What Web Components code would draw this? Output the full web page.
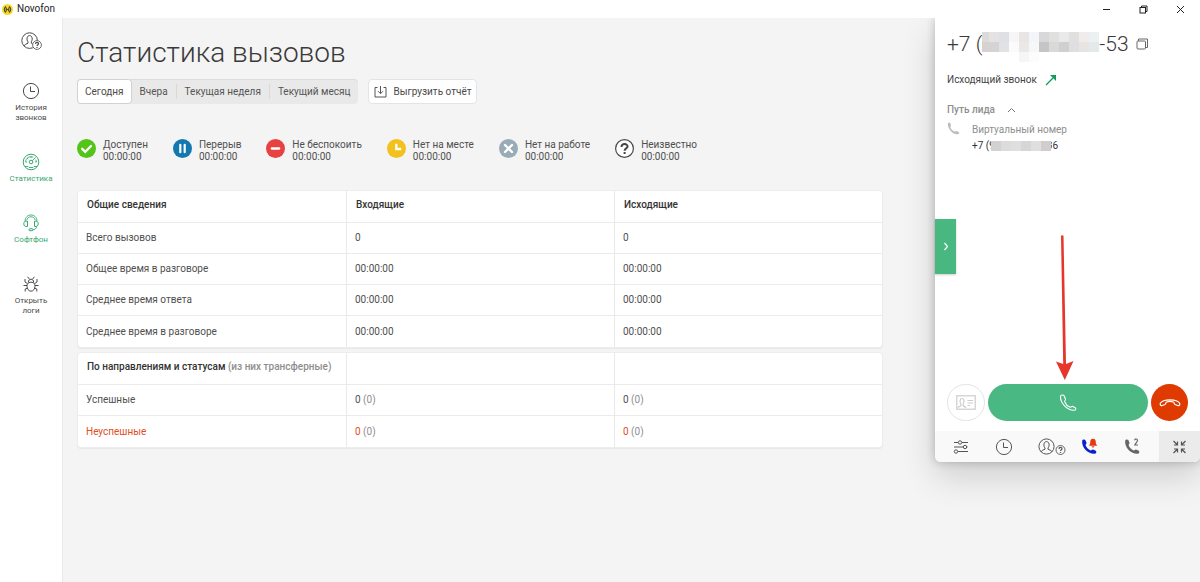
<!DOCTYPE html>
<html lang="ru">
<head>
<meta charset="utf-8">
<meta name="viewport" content="width=device-width, initial-scale=1">
<title>Novofon</title>
<style>
  body { margin: 0; background: #f4f4f4; color: #4f4f4f; font-family: Roboto, "Liberation Sans", sans-serif; font-size: 10px; line-height: 12px; }
</style>
</head>
<body>
<novofon-app></novofon-app>

<script>
const ICONS = {
  logo: [11, 11, `<circle cx="5.5" cy="5.5" r="5.5" fill="#f7d92c"/><g fill="none" stroke="#4d4720" stroke-width="1.1"><path d="M4 2.6A3.3 3.3 0 0 0 4 8.4M7 2.6A3.3 3.3 0 0 1 7 8.4M4.2 3.4V7.6M6.8 3.4V7.6M4.2 4.6L6.8 6.4"/></g>`],
  minimize: [9, 9, `<path d="M1 4.5H8" stroke="#222" fill="none"/>`],
  restore: [9, 9, `<g fill="none" stroke="#222"><rect x="1" y="2.5" width="5.5" height="5.5"/><path d="M2.5 2.5V1H8V6.5H6.5"/></g>`],
  close: [9, 9, `<path d="M1 1L8 8M8 1L1 8" stroke="#222" fill="none"/>`],
  user: [21, 20, `<g fill="none" stroke="currentColor"><circle cx="8.6" cy="8.6" r="7.8"/><path d="M3 14C3.4 12.4 6 11.8 7 11.2V9.8C5.4 8 5.6 3.6 8.6 3.6S11.8 8 10.3 9.8V11.2L11.6 12"/><circle cx="16" cy="13" r="4.4" fill="#fff" stroke-width=".8"/><path d="M14.6 12C14.6 10 17.5 10 17.5 11.7C17.5 12.6 16 12.8 16 14M16 15V16" stroke-width="1.2"/></g>`],
  contact: [28, 18, `<g fill="none" stroke="currentColor"><circle cx="8.5" cy="8.5" r="7.6"/><path d="M3 13.800C3.400 12.400 6 11.800 7 11.200V10C5.200 8 5.500 3.600 8.500 3.600S11.800 8 10 10V11.200C11 11.800 13.600 12.400 14 13.800"/><circle cx="22.500" cy="12" r="4.500" stroke-width=".9"/><path d="M21 11C21 9 24 9 24 10.700C24 11.600 22.500 11.800 22.500 13M22.500 14V15" stroke-width="1.200"/></g>`],
  clock: [18, 18, `<g fill="none" stroke="currentColor"><circle cx="9" cy="9" r="7.600"/><path d="M8.500 4.500V9.500H13"/></g>`],
  gauge: [18, 18, `<g fill="none" stroke="currentColor"><circle cx="9" cy="9" r="7.800"/><circle cx="9" cy="9" r="1.800"/><path d="M10.300 7.700L13.600 4.400M3.600 9A5.400 5.400 0 0 1 11.300 4.200M14.400 9A5.400 5.400 0 0 0 13.800 6.600M3 13.500H6L7 14.500H11L12 13.500H15M3.600 9H5M9 3.600V5M13 9H14.400M5.200 5.200L6.100 6.100" stroke-width=".9"/></g>`],
  headset: [18, 18, `<g fill="none" stroke="currentColor"><path d="M3 7.500C3 -1.200 15 -1.200 15 7.500M4.800 6.200C5.400 1.600 12.600 1.600 13.200 6.200" stroke-width=".9"/><path d="M5.500 7.200C3 6.600 1.800 8 1.800 9.800S3 13 5.500 12.400ZM12.500 7.200C15 6.600 16.200 8 16.200 9.800S15 13 12.500 12.400Z"/><path d="M14.500 12.500C14.500 14.500 13 15.600 11 15.800"/><rect x="7" y="14.700" width="4" height="2" rx="1"/></g>`],
  bug: [18, 18, `<g fill="none" stroke="currentColor"><path d="M9 7.200C5.800 7.200 5 9 5 11.300S6.500 16.200 9 16.200S13 13.600 13 11.300S12.200 7.200 9 7.200ZM6.300 7.300C6.300 3.200 11.700 3.200 11.700 7.300M7.500 4.200L5.600 1.800M10.500 4.200L12.400 1.800M5 10.500H1.500M13 10.500H16.500M5.400 8.600L3 7V4M12.600 8.600L15 7V4M5.600 13.200L3.200 14V16.500M12.400 13.200L14.800 14V16.500"/></g>`],
  download: [13, 13, `<g fill="none" stroke="#555"><path d="M3.500 2.500H1V12H12V2.500H9.500M6.500 1V8.500M4 6.200L6.500 8.700L9 6.200"/></g>`],
  available: [20, 20, `<circle cx="9.500" cy="9.500" r="9.500" fill="#52c41a"/><path d="M5.200 9.800L8.300 12.800L14 7" fill="none" stroke="#fff" stroke-width="2.300" stroke-linecap="round"/>`],
  pause: [20, 20, `<circle cx="9.500" cy="9.500" r="9.500" fill="#1478b0"/><path d="M7.300 5.800V13.200M11.700 5.800V13.200" stroke="#fff" stroke-width="2.200" stroke-linecap="round"/>`],
  dnd: [20, 20, `<circle cx="9.500" cy="9.500" r="9.500" fill="#e84142"/><path d="M5.800 9.500H13.200" stroke="#fff" stroke-width="2.300" stroke-linecap="round"/>`],
  away: [20, 20, `<circle cx="9.500" cy="9.500" r="9.500" fill="#f2c11c"/><path d="M9.300 4.800V10H14.200" fill="none" stroke="#fff" stroke-width="2.300"/>`],
  off: [20, 20, `<circle cx="9.500" cy="9.500" r="9.500" fill="#9aabb8"/><path d="M6 6L13 13M13 6L6 13" stroke="#fff" stroke-width="2.400" stroke-linecap="round"/>`],
  unknown: [20, 20, `<circle cx="9.500" cy="9.500" r="8.900" fill="#fff" stroke="#4a4a4a" stroke-width="1.200"/><path d="M6.500 8C6.300 4.200 12.700 4.200 12.600 7.600C12.600 9.400 9.600 9.500 9.600 11.700M9.600 13.100V15" fill="none" stroke="#444" stroke-width="2"/>`],
  copy: [13, 12, `<g fill="none" stroke="#666"><rect x="1" y="3" width="8.500" height="8" rx="1"/><path d="M2.500 3V1H11.500V9.500H9.500"/></g>`],
  outgoing: [12, 12, `<path d="M1 11L8 4" stroke="#0f9d58" stroke-width="1.200"/><path d="M5 1H11V7Z" fill="#0f9d58"/>`],
  up: [9, 6, `<path d="M1 5L4.500 1.500L8 5" fill="none" stroke="#777"/>`],
  right: [6, 9, `<path d="M1.500 1L4.500 4.500L1.500 8" fill="none" stroke="#fff" stroke-width="1.200"/>`],
  handset: [13, 13, `<path d="M1 1.200C1.800 .2 3.200 .5 3.500 1.800L3.900 3.400C4.100 4.200 3.200 4.500 3.200 5C3.600 7 6.200 9.200 8 9.700C8.700 9.800 9 8.900 9.700 9.100L11.500 9.900C12.600 10.400 12.300 11.800 11.500 12C5.500 13.200 .2 6 1 1.200Z" fill="#bcbcbc"/>`],
  card: [20, 15, `<g fill="none" stroke="#ccc" stroke-width="1.200"><rect x=".8" y=".8" width="18.400" height="13.400"/><path d="M2 12.800C2 11.600 4.600 11.600 4.900 10.500V9.200C3.300 6.600 4 3.500 6 3.500S8.700 6.600 7.100 9.200V10.500C7.400 11.600 9.800 11.600 10 12.800M11.500 5.500H17M11.500 8H17M11.500 10.500H14"/></g>`],
  call: [18, 18, `<path d="M1.500 2.300C1 7.800 7 16.500 15.400 16.300C17 16.200 17.200 14.400 16.200 13.700L13.900 12.500C12.700 12 12.200 13.500 10.900 13.100C8.900 12.300 6.400 9.500 5.700 7.700C5.400 6.600 6.800 6 6.500 5L5.100 1.800C4.300 .5 1.800 .7 1.500 2.300Z" fill="none" stroke="#fff" stroke-width="1.100"/>`],
  hangup: [22, 9, `<path d="M1.300 5.300C4 .6 18 .6 20.700 5.300C21.200 7 20 8 18.700 7.500L16 6.500C15 6 15.500 4.500 14.300 4C12.500 3.300 9.500 3.300 7.700 4C6.500 4.500 7 6 6 6.500L3.300 7.500C2 8 .8 7 1.300 5.300Z" fill="none" stroke="#fff" stroke-width="1.200"/>`],
  sliders: [16, 14, `<g fill="none" stroke="currentColor"><path d="M1 2.500H5M9 2.500H15M1 7H10.500M14.500 7H15M5 11.500H15"/><circle cx="7" cy="2.500" r="1.700"/><circle cx="12" cy="7" r="1.700"/><circle cx="3" cy="11.500" r="1.700"/></g>`],
  ring: [17, 17, `<path d="M1.200 2.500C1.500 1.300 3.600 1 4.300 2L5.500 4.700C5.800 5.700 4.500 6.200 4.600 7C5.200 9.300 7.400 11.500 9.700 12.400C10.600 12.600 11 11.200 12 11.500L14.800 12.800C15.800 13.600 15.400 15.500 14 15.700C6.500 16.300 .3 9 1.200 2.500Z" fill="#0a1fd0"/><path d="M12 .8C14.200 .8 14.800 2.500 14.800 4.500C14.800 6 15.400 6.800 16.400 7.800H7.800C8.700 6.800 9.200 6 9.200 4.500C9.200 2.500 9.900 .8 12 .8ZM10.700 8.300H13.300C13.200 10 10.800 10 10.700 8.300Z" fill="#e53a12"/>`],
  second: [17, 17, `<path d="M1.200 2.500C1.500 1.300 3.600 1 4.300 2L5.500 4.700C5.800 5.700 4.500 6.200 4.600 7C5.200 9.300 7.400 11.500 9.700 12.400C10.600 12.600 11 11.200 12 11.500L14.800 12.800C15.800 13.600 15.400 15.500 14 15.700C6.500 16.300 .3 9 1.200 2.500Z" fill="#666"/><path d="M10.700 2.300C10.700 .5 13.600 .5 13.500 2.500C13.400 3.800 11.500 5 10.800 7H14" fill="none" stroke="#666" stroke-width="1.200"/>`],
  shrink: [15, 14, `<g stroke="#555" stroke-width="1.200" fill="none"><path d="M1.500 1L5.500 5M5.500 1.500V5H2M13.500 1L9.500 5M9.500 1.500V5H13M1.500 13L5.500 9M5.500 12.500V9H2M13.500 13L9.500 9M9.500 12.500V9H13"/></g>`]
};

function define(name, markup, setup) {
  const template = document.createElement('template');
  template.innerHTML = markup;
  customElements.define(name, class extends HTMLElement {
    constructor() {
      super();
      this.attachShadow({ mode: 'open' }).append(template.content.cloneNode(true));
    }
    connectedCallback() { if (setup) setup(this, this.shadowRoot); }
  });
}

function placeIcon(host, root) {
  const icon = document.createElement('ui-icon');
  icon.setAttribute('name', host.getAttribute('icon'));
  root.querySelector('.icon').replaceWith(icon);
}

define('ui-icon', `<style>:host{display:block;flex:none} svg{display:block}</style>`, (host, root) => {
  if (root.querySelector('svg')) return;
  const [w, h, body] = ICONS[host.getAttribute('name')];
  root.innerHTML += `<svg width="${w}" height="${h}" viewBox="0 0 ${w} ${h}" aria-hidden="true">${body}</svg>`;
});

define('title-bar', `
<style>
  :host { display: flex; align-items: center; height: 18px; background: #fff; color: #222; padding: 0 15px 0 2px; }
  .name { margin-left: 4px; flex: 1; }
  .controls { display: flex; gap: 28px; }
  button { border: 0; padding: 0; background: none; }
</style>
<ui-icon name="logo"></ui-icon>
<span class="name">Novofon</span>
<div class="controls">
  <button aria-label="Свернуть"><ui-icon name="minimize"></ui-icon></button>
  <button aria-label="Развернуть"><ui-icon name="restore"></ui-icon></button>
  <button aria-label="Закрыть"><ui-icon name="close"></ui-icon></button>
</div>`);

define('nav-item', `
<style>
  :host { display: block; color: #4a4a4a; }
  :host([green]) { color: #36a871; }
  a { display: flex; flex-direction: column; align-items: center; gap: 3px; color: inherit; text-decoration: none; font-size: 8px; line-height: 10px; text-align: center; }
</style>
<a href="#"><i class="icon"></i><slot></slot></a>`, placeIcon);

define('side-nav', `
<style>
  :host { display: block; box-sizing: border-box; width: 63px; flex: none; background: #fff; border-right: 1px solid #e9e9e9; }
  nav { display: flex; flex-direction: column; gap: 30px; padding-top: 14px; }
  .profile { border: 0; padding: 0; background: none; color: #4a4a4a; align-self: center; }
</style>
<nav>
  <button class="profile" aria-label="Статус"><ui-icon name="user"></ui-icon></button>
  <nav-item icon="clock"><span>История<br>звонков</span></nav-item>
  <nav-item icon="gauge" green><span>Статистика</span></nav-item>
  <nav-item icon="headset" green><span>Софтфон</span></nav-item>
  <nav-item icon="bug"><span>Открыть<br>логи</span></nav-item>
</nav>`);

define('period-tabs', `
<style>
  :host { display: flex; height: 25px; background: #e9e9e9; border-radius: 4px; box-shadow: inset 0 1px 0 #dcdcdc; }
  button { font: inherit; color: #555; border: 0; background: none; padding: 0 8px; }
  button[aria-pressed="true"] { background: #fff; border-radius: 4px; box-shadow: inset 0 0 0 1px #d2d2d2; color: #4a4a4a; }
  i { width: 1px; background: #d9d9d9; margin: 5px 0; }
</style>
<button aria-pressed="true">Сегодня</button>
<button>Вчера</button><i></i>
<button>Текущая неделя</button><i></i>
<button>Текущий месяц</button>`);

define('export-button', `
<style>
  :host { display: block; }
  button { display: flex; align-items: center; gap: 6px; height: 25px; box-sizing: border-box; padding: 0 5px; font: inherit; color: #4a4a4a; background: #fff; border: 1px solid #e4e4e4; border-radius: 4px; }
</style>
<button><ui-icon name="download"></ui-icon><slot></slot></button>`);

define('status-item', `
<style>
  :host { display: flex; gap: 6px; }
  time, slot { display: block; }
</style>
<i class="icon"></i>
<div><slot></slot><time>00:00:00</time></div>`, placeIcon);

const TABLES = {
  summary: {
    head: ['Общие сведения', 'Входящие', 'Исходящие'],
    rows: [
      ['Всего вызовов', '0', '0'],
      ['Общее время в разговоре', '00:00:00', '00:00:00'],
      ['Среднее время ответа', '00:00:00', '00:00:00'],
      ['Среднее время в разговоре', '00:00:00', '00:00:00']
    ]
  },
  directions: {
    head: ['По направлениям и статусам <span>(из них трансферные)</span>', '', ''],
    rows: [
      ['Успешные', '0 <span>(0)</span>', '0 <span>(0)</span>'],
      ['Неуспешные', '0 <span>(0)</span>', '0 <span>(0)</span>']
    ],
    failed: 1
  }
};

define('stat-table', `
<style>
  :host { display: block; background: #fff; border: 1px solid #ededed; border-radius: 4px; box-shadow: 0 1px 1px #e8e8e8; }
  table { width: 100%; table-layout: fixed; border-collapse: separate; border-spacing: 0; }
  th, td { box-sizing: border-box; height: 31px; padding: 0 8px; text-align: left; white-space: nowrap; }
  th { font-weight: 500; color: #333; padding: 0 8px 3px 9px; }
  td { border-top: 1px solid #ebebeb; }
  tr:last-child td { height: 32px; }
  th + th, td + td { border-left: 1px solid #e9e9e9; }
  span { color: #8e8e8e; }
  .failed { color: #e04e26; }
</style>
<table><thead></thead><tbody></tbody></table>`, (host, root) => {
  const data = TABLES[host.getAttribute('source')];
  root.querySelector('thead').innerHTML = `<tr>${data.head.map(h => `<th scope="col">${h}</th>`).join('')}</tr>`;
  root.querySelector('tbody').innerHTML = data.rows.map((r, i) =>
    `<tr class="${i === data.failed ? 'failed' : ''}">${r.map(c => `<td>${c}</td>`).join('')}</tr>`).join('');
});

define('call-statistics', `
<style>
  :host { display: block; flex: 1; min-width: 0; box-sizing: border-box; padding: 18px 52px 24px 14px; }
  h1 { margin: 0; font-weight: 300; font-size: 28px; line-height: 34px; color: #3a3a3a; }
  .toolbar { display: flex; gap: 10px; margin-top: 9px; }
  .statuses { display: flex; gap: 25px; margin-top: 34px; padding-top: 1px; white-space: nowrap; }
  .tables { display: flex; flex-direction: column; gap: 4px; margin-top: 27px; }
</style>
<h1>Статистика вызовов</h1>
<div class="toolbar">
  <period-tabs></period-tabs>
  <export-button>Выгрузить отчёт</export-button>
</div>
<div class="statuses">
  <status-item icon="available">Доступен</status-item>
  <status-item icon="pause">Перерыв</status-item>
  <status-item icon="dnd">Не беспокоить</status-item>
  <status-item icon="away">Нет на месте</status-item>
  <status-item icon="off">Нет на работе</status-item>
  <status-item icon="unknown">Неизвестно</status-item>
</div>
<div class="tables">
  <stat-table source="summary"></stat-table>
  <stat-table source="directions"></stat-table>
</div>`);

define('number-mask', `
<style>
  :host { display: grid; flex: none; grid-auto-rows: 10px; position: relative; }
  :host([columns="12"]) { grid-template-columns: 7px repeat(11, 10px); }
  :host([columns="6"]) { grid-template-columns: repeat(6, 10px); }
</style>`, (host, root) => {
  for (const color of host.getAttribute('colors').split(' ')) {
    const cell = document.createElement('i');
    cell.style.background = color === '-' ? 'none' : '#' + color;
    root.append(cell);
  }
});

define('soft-phone', `
<style>
  :host { display: flex; flex-direction: column; position: relative; z-index: 1; flex: none; align-self: flex-start; width: 265px; min-height: 444px; background: #fff; border-radius: 0 0 6px 6px; box-shadow: 0 0 10px rgba(0,0,0,.22), 0 14px 34px rgba(0,0,0,.16); clip-path: inset(0 0 -70px -50px); }
  button { border: 0; padding: 0; background: none; color: inherit; font: inherit; display: flex; align-items: center; justify-content: center; }
  .info { padding: 14px 12px 0; flex: 1; }
  .number { display: flex; font-weight: 300; font-size: 21px; line-height: 24px; height: 30px; color: #3a3a3a; white-space: pre; }
  .number button { height: 24px; margin-left: 7px; }
  .row { display: flex; align-items: center; }
  .direction { gap: 8px; margin-top: 12px; color: #444; }
  .lead { font-weight: 500; color: #8e8e8e; gap: 12px; margin-top: 18px; }
  .path { display: flex; gap: 12px; margin-top: 6px; line-height: 16px; color: #8e8e8e; }
  .virtual { display: flex; align-items: center; color: #333; }
  .virtual number-mask { margin: 0 -4px; z-index: 1; }
  .handle { position: absolute; left: 0; top: 201px; width: 21px; height: 55px; background: #49b780; box-shadow: 0 1px 2px rgba(0,0,0,.2); }
  .pointer { position: absolute; left: 120px; top: 217px; }
  .actions { display: flex; gap: 3px; padding: 0 12px 10px; }
  .actions button { height: 37px; border-radius: 19px; }
  .details { width: 38px; box-sizing: border-box; border: 1px solid #e4e4e4; }
  .actions .answer { flex: 1; background: #4ab883; }
  .reject { width: 37px; background: #df3a00; }
  .tools { display: flex; height: 31px; background: #f9f9f9; border-radius: 0 0 6px 6px; color: #555; }
  .group { flex: 1; display: grid; grid-template-columns: repeat(5, 1fr); padding: 0 5px 0 4px; }
  .group .who { padding-left: 10px; }
  .shrink { width: 41px; background: #ebebeb; border-radius: 0 0 6px 0; }
</style>
<div class="info">
  <div class="number">+7 (<number-mask columns="12" colors="dcdada e4e2e2 dfe0e4 f6f6f7 e8e6e4 f4f5f8 d8d8da e1e0df e9e9e9 e2e0df efeceb ecf0f1 d7d1cf d5d3d3 e2e2e6 fbfbfb ebe8e6 f6f7f7 c5c5c5 d9d9d9 d0d0d0 dedfe0 e8e4e2 e4eaec - - - - f7f6f6 fcfcfc - - - - - -"></number-mask>-53<button aria-label="Копировать"><ui-icon name="copy"></ui-icon></button></div>
  <div class="row direction">Исходящий звонок<ui-icon name="outgoing"></ui-icon></div>
  <div class="row lead">Путь лида<ui-icon name="up"></ui-icon></div>
  <div class="path">
    <ui-icon name="handset"></ui-icon>
    <div>Виртуальный номер
      <div class="virtual">+7 (9<number-mask columns="6" colors="d2d2d2 dddbdb e0dedf d4d6d7 dfdfe0 d2cdca"></number-mask>36</div>
    </div>
  </div>
</div>
<div class="actions">
  <button class="details" aria-label="Карточка"><ui-icon name="card"></ui-icon></button>
  <button class="answer" aria-label="Позвонить"><ui-icon name="call"></ui-icon></button>
  <button class="reject" aria-label="Завершить"><ui-icon name="hangup"></ui-icon></button>
</div>
<div class="tools">
  <div class="group">
    <button aria-label="Настройки"><ui-icon name="sliders"></ui-icon></button>
    <button aria-label="История"><ui-icon name="clock"></ui-icon></button>
    <button class="who" aria-label="Статус"><ui-icon name="contact"></ui-icon></button>
    <button aria-label="Звонок"><ui-icon name="ring"></ui-icon></button>
    <button aria-label="Вторая линия"><ui-icon name="second"></ui-icon></button>
  </div>
  <button class="shrink" aria-label="Свернуть"><ui-icon name="shrink"></ui-icon></button>
</div>
<button class="handle" aria-label="Раскрыть"><ui-icon name="right"></ui-icon></button>
<svg class="pointer" width="20" height="146" viewBox="0 0 20 146" aria-hidden="true"><path d="M6 .5H8.500L11 129L18.500 126L9.800 145L1 126.500L8.200 129Z" fill="#e6352b"/></svg>`);

define('novofon-app', `
<style>
  :host { display: flex; flex-direction: column; min-height: 100vh; overflow-x: hidden; }
  main { display: flex; flex: 1; }
</style>
<title-bar></title-bar>
<main>
  <side-nav></side-nav>
  <call-statistics></call-statistics>
  <soft-phone></soft-phone>
</main>`);
</script>
</body>
</html>
